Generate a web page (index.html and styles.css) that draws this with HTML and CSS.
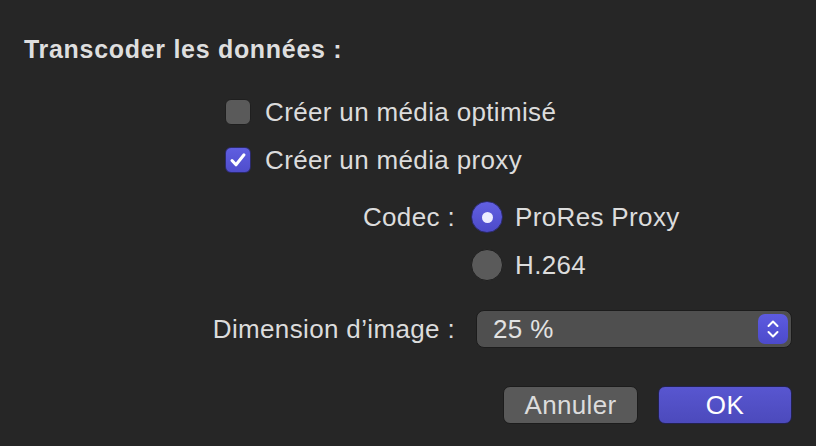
FILE: index.html
```html
<!DOCTYPE html>
<html lang="fr">
<head>
<meta charset="utf-8">
<title>Transcoder les données</title>
<link rel="stylesheet" href="styles.css">
</head>
<body>
<div class="dialog">
  <div class="title">Transcoder les données :</div>
  <div class="checks">
    <label class="row">
      <span class="checkbox"></span>
      <span class="text">Créer un média optimisé</span>
    </label>
    <label class="row">
      <span class="checkbox checked">
        <svg width="26" height="26" viewBox="0 0 26 26"><path d="M7 13.5 L11 17.8 L19 7.8" fill="none" stroke="#fff" stroke-width="3" stroke-linecap="round" stroke-linejoin="round"/></svg>
      </span>
      <span class="text">Créer un média proxy</span>
    </label>
  </div>
  <div class="form">
    <div class="label">Codec :</div>
    <label class="row">
      <span class="radio on"><span class="dot"></span></span>
      <span class="text">ProRes Proxy</span>
    </label>
    <div class="label"></div>
    <label class="row">
      <span class="radio"></span>
      <span class="text">H.264</span>
    </label>
    <div class="label">Dimension d’image :</div>
    <div class="row">
      <div class="popup">
        <span class="value">25 %</span>
        <span class="stepper">
          <svg width="30" height="30" viewBox="0 0 30 30"><path d="M10.5 12 L15 7.5 L19.5 12 M10.5 18 L15 22.5 L19.5 18" fill="none" stroke="#fff" stroke-width="2" stroke-linecap="round" stroke-linejoin="round"/></svg>
        </span>
      </div>
    </div>
  </div>
  <div class="buttons">
    <button class="btn cancel">Annuler</button>
    <button class="btn ok">OK</button>
  </div>
</div>
</body>
</html>
```
FILE: styles.css
```css
html, body {
  margin: 0;
  padding: 0;
  background: #262626;
}
body {
  font-family: "Liberation Sans", Arial, sans-serif;
  color: #dcdcdc;
  font-size: 26px;
  letter-spacing: 0.35px;
}
.dialog {
  display: flex;
  flex-direction: column;
  padding: 35px 24px 0 24px;
}
.title {
  height: 28px;
  line-height: 28px;
  font-size: 25px;
  font-weight: 700;
  letter-spacing: 0.7px;
  color: #dedede;
}
.checks {
  margin-left: 201px;
  margin-top: 25px;
  display: flex;
  flex-direction: column;
}
.row {
  display: flex;
  align-items: center;
  height: 48px;
}
.text {
  line-height: 30px;
}
.checkbox {
  width: 26px;
  height: 26px;
  box-sizing: border-box;
  border-radius: 6px;
  background: #5a5a5a;
  border: 1px solid #1f1f1f;
  margin-right: 14px;
  display: flex;
  align-items: center;
  justify-content: center;
  flex-shrink: 0;
}
.checkbox.checked {
  background: linear-gradient(#5f5ee0, #4f4dcc);
  border-color: #2b2a6a;
}
.checkbox svg {
  display: block;
  margin: -1px;
}
.form {
  margin-top: 9px;
  display: grid;
  grid-template-columns: 431px 1fr;
  column-gap: 16px;
}
.form .label {
  height: 48px;
  line-height: 48px;
  text-align: right;
  white-space: nowrap;
}
.form > .row:last-child {
  margin-top: 16px;
}
.form > .label:nth-last-child(2) {
  margin-top: 16px;
}
.radio {
  width: 32px;
  height: 32px;
  box-sizing: border-box;
  border-radius: 50%;
  background: #5a5a5a;
  border: 1px solid #1f1f1f;
  margin-right: 12px;
  display: flex;
  align-items: center;
  justify-content: center;
  flex-shrink: 0;
}
.radio.on {
  background: linear-gradient(#6260e2, #4c4ac8);
  border-color: #2b2a6a;
}
.radio .dot {
  width: 11px;
  height: 11px;
  border-radius: 50%;
  background: #ececff;
}
.popup {
  margin-left: 5px;
  width: 316px;
  height: 38px;
  box-sizing: border-box;
  border-radius: 8px;
  background: #4f4f4f;
  border: 1px solid #1c1c1c;
  display: flex;
  align-items: center;
  justify-content: space-between;
  padding: 0 3px 0 16px;
}
.popup .value {
  color: #e2e2e2;
}
.stepper {
  width: 30px;
  height: 30px;
  border-radius: 7px;
  background: linear-gradient(#5d5be0, #4c4acb);
  display: flex;
}
.stepper svg {
  display: block;
}
.buttons {
  margin-top: 33px;
  display: flex;
  justify-content: flex-end;
  gap: 20px;
}
.btn {
  height: 38px;
  box-sizing: border-box;
  border-radius: 7px;
  font-family: "Liberation Sans", Arial, sans-serif;
  font-size: 26px;
  letter-spacing: 0.35px;
  padding: 0;
  line-height: 36px;
  border: 1px solid #1c1c1c;
}
.btn.cancel {
  width: 135px;
  background: #595959;
  color: #dcdcdc;
}
.btn.ok {
  width: 134px;
  background: linear-gradient(#5856d0, #4c4abc);
  color: #ffffff;
  border-color: #23224f;
}
```
